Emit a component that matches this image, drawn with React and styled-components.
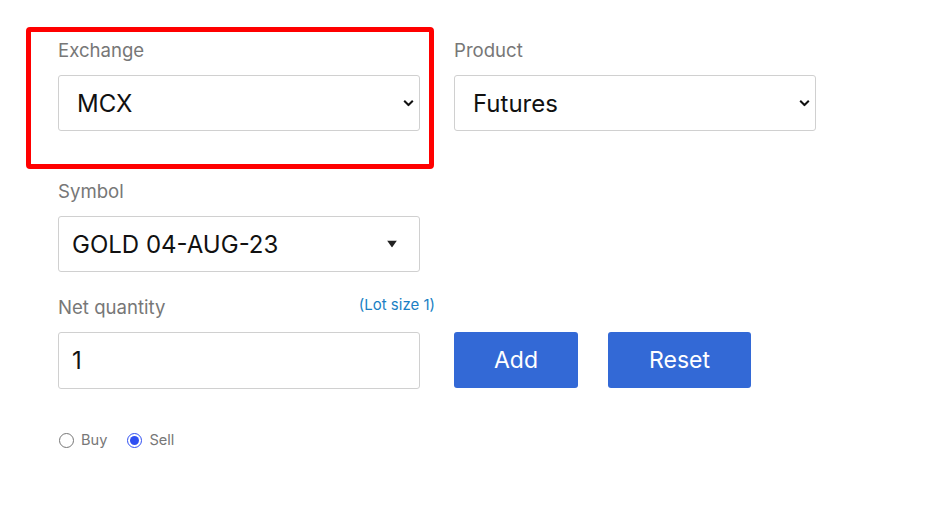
import React from 'react'
import styled, { createGlobalStyle } from 'styled-components'

const Global = createGlobalStyle`
body {
  margin: 0;
  background: #fff;
  font-family: Inter, "Noto Sans", sans-serif;
}
`

const Form = styled.form`
display: grid;
grid-template-columns: 377px 377px;
column-gap: 19px;
padding: 40px 0 0 58px;
`

const Field = styled.div`
position: relative;
display: flex;
flex-direction: column;
margin-bottom: ${p => p.$gap ?? 25}px;

${p => p.$highlight && `
  &::before {
    content: '';
    position: absolute;
    top: -13px;
    left: -32px;
    right: 1px;
    bottom: -38px;
    border: 5px solid #ff0000;
    border-radius: 4px;
    pointer-events: none;
  }
`}
`

const LabelRow = styled.div`
display: flex;
justify-content: space-between;
align-items: center;
height: 20px;
margin-bottom: 15px;
`

const Label = styled.label`
font-size: 18.6px;
line-height: 20px;
color: #777;
`

const LotSize = styled.span`
font-size: 15px;
line-height: 16px;
color: #1a7fc4;
margin-top: -5px;
`

const SelectWrap = styled.div`
position: relative;
width: 362px;
height: 56px;
box-sizing: border-box;
border: 1px solid #d0d0d0;
border-radius: 3px;
background: #fff;
display: flex;
align-items: center;
`

const Select = styled.select`
appearance: none;
border: 0;
outline: 0;
background: transparent;
width: 100%;
height: 100%;
font-family: Inter, "Noto Sans", sans-serif;
font-size: 24px;
color: #111;
padding: 0 ${p => p.$pad || 18}px;
`

const Arrow = styled.span`
position: absolute;
right: ${p => p.$right}px;
top: 50%;
transform: translateY(-50%);
display: flex;
pointer-events: none;
`

const Input = styled.input`
width: 362px;
height: 57px;
box-sizing: border-box;
border: 1px solid #d0d0d0;
border-radius: 3px;
font-family: Inter, "Noto Sans", sans-serif;
font-size: 24px;
color: #111;
padding: 0 13px;
outline: 0;
`

const Actions = styled.div`
display: flex;
align-items: flex-end;
gap: 30px;
margin-bottom: 26px;
`

const Button = styled.button`
width: ${p => p.$w}px;
height: 56px;
border: 0;
border-radius: 3px;
background: #3369d6;
color: #fff;
font-family: Inter, "Noto Sans", sans-serif;
font-size: 23px;
cursor: pointer;
`

const Radios = styled.div`
grid-column: 1 / 3;
display: flex;
align-items: center;
gap: 19px;
margin-top: 17px;
`

const RadioLabel = styled.label`
display: flex;
align-items: center;
gap: 7px;
font-size: 14.6px;
color: #777;

input {
  margin: 0 0 0 1px;
  width: 15px;
  height: 15px;
  accent-color: #2f4ff2;
}
`

const Chevron = () => (
  <svg width="11" height="7" viewBox="0 0 11 7">
    <path d="M1.2 1.2l4.3 4.3 4.3-4.3" fill="none" stroke="#111" strokeWidth="2" />
  </svg>
)

const Caret = () => (
  <svg width="10" height="7" viewBox="0 0 10 7">
    <path d="M0 0h10L5 7z" fill="#222" />
  </svg>
)

const App = () => {
  return (
    <>
      <Global />
      <Form onSubmit={e => e.preventDefault()}>
        <Field $highlight $gap={50}>
          <LabelRow><Label>Exchange</Label></LabelRow>
          <SelectWrap>
            <Select defaultValue="MCX">
              <option>MCX</option>
              <option>NSE</option>
            </Select>
            <Arrow $right={5}><Chevron /></Arrow>
          </SelectWrap>
        </Field>
        <Field $gap={50}>
          <LabelRow><Label>Product</Label></LabelRow>
          <SelectWrap>
            <Select defaultValue="Futures">
              <option>Futures</option>
              <option>Options</option>
            </Select>
            <Arrow $right={5}><Chevron /></Arrow>
          </SelectWrap>
        </Field>

        <Field>
          <LabelRow><Label>Symbol</Label></LabelRow>
          <SelectWrap>
            <Select $pad={13} defaultValue="GOLD 04-AUG-23">
              <option>GOLD 04-AUG-23</option>
            </Select>
            <Arrow $right={22}><Caret /></Arrow>
          </SelectWrap>
        </Field>
        <div />

        <Field>
          <LabelRow>
            <Label>Net quantity</Label>
            <LotSize>(Lot size 1)</LotSize>
          </LabelRow>
          <Input defaultValue="1" />
        </Field>
        <Actions>
          <Button $w={124}>Add</Button>
          <Button $w={143}>Reset</Button>
        </Actions>

        <Radios>
          <RadioLabel><input type="radio" name="side" />Buy</RadioLabel>
          <RadioLabel><input type="radio" name="side" defaultChecked />Sell</RadioLabel>
        </Radios>
      </Form>
    </>
  )
}

export default App
